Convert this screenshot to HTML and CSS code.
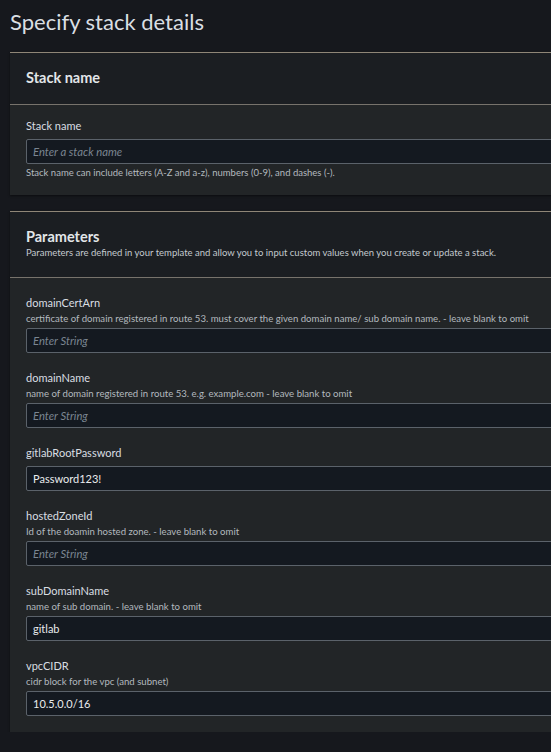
FILE: index.html
```html
<!DOCTYPE html>
<html lang="en">
<head>
<meta charset="utf-8">
<title>Specify stack details</title>
<link rel="stylesheet" href="styles.css">
</head>
<body>
<div class="page">
  <h1 class="title">Specify stack details</h1>

  <section class="card">
    <div class="card-header card-header--simple">
      <h2 class="card-title">Stack name</h2>
    </div>
    <div class="card-body card-body--first">
      <div class="field">
        <div class="label">Stack name</div>
        <div class="input placeholder">Enter a stack name</div>
        <div class="constraint">Stack name can include letters (A-Z and a-z), numbers (0-9), and dashes (-).</div>
      </div>
    </div>
  </section>

  <section class="card">
    <div class="card-header">
      <h2 class="card-title">Parameters</h2>
      <div class="card-desc">Parameters are defined in your template and allow you to input custom values when you create or update a stack.</div>
    </div>
    <div class="card-body">
      <div class="field">
        <div class="label">domainCertArn</div>
        <div class="desc">certificate of domain registered in route 53. must cover the given domain name/ sub domain name. - leave blank to omit</div>
        <div class="input placeholder">Enter String</div>
      </div>
      <div class="field">
        <div class="label">domainName</div>
        <div class="desc">name of domain registered in route 53. e.g. example.com - leave blank to omit</div>
        <div class="input placeholder">Enter String</div>
      </div>
      <div class="field">
        <div class="label">gitlabRootPassword</div>
        <div class="input">Password123!</div>
      </div>
      <div class="field">
        <div class="label">hostedZoneId</div>
        <div class="desc">Id of the doamin hosted zone. - leave blank to omit</div>
        <div class="input placeholder">Enter String</div>
      </div>
      <div class="field">
        <div class="label">subDomainName</div>
        <div class="desc">name of sub domain. - leave blank to omit</div>
        <div class="input">gitlab</div>
      </div>
      <div class="field">
        <div class="label">vpcCIDR</div>
        <div class="desc">cidr block for the vpc (and subnet)</div>
        <div class="input">10.5.0.0/16</div>
      </div>
    </div>
  </section>
</div>
</body>
</html>
```

FILE: styles.css
```css
html, body {
  margin: 0;
  padding: 0;
  background: #16181d;
  overflow: hidden;
}

.page {
  width: 720px;
  padding: 0 0 0 10px;
  font-family: "Lato", "Open Sans", sans-serif;
  color: #d5dbdb;
  display: flex;
  flex-direction: column;
  gap: 16px;
}

.title {
  margin: 0;
  height: 28px;
  padding-top: 8px;
  font-size: 22px;
  line-height: 28px;
  font-weight: 400;
  color: #dadfe3;
}

.card {
  background: #222527;
  border-top: 1px solid #8f8677;
  box-shadow: 0 1px 2px rgba(0, 0, 0, 0.5);
}

.card-header {
  background: #1b1e22;
  padding: 16px 16px 17px;
  border-bottom: 1px solid #77736c;
}

.card-title {
  margin: 0;
  font-size: 14.5px;
  line-height: 18px;
  font-weight: 700;
  color: #e2e6e9;
}

.card-desc {
  font-size: 9.5px;
  line-height: 14px;
  color: #c3c9ce;
}

.card-body {
  padding: 16px;
  display: flex;
  flex-direction: column;
  gap: 16px;
}

.card-body--first {
  padding-top: 12px;
}

.field {
  display: flex;
  flex-direction: column;
}

.label {
  font-size: 11px;
  line-height: 18px;
  color: #d9dee2;
}

.desc {
  font-size: 9.6px;
  line-height: 14px;
  color: #b3b9bf;
}

.input {
  margin-top: 4px;
  height: 25px;
  box-sizing: border-box;
  border: 1px solid #5b626a;
  border-radius: 2px;
  background: #141920;
  padding: 0 6px;
  font-size: 11px;
  line-height: 23px;
  color: #e9ebed;
}

.label + .input {
  margin-top: 4px;
}

.desc + .input {
  margin-top: 2px;
}

.placeholder {
  font-style: italic;
  font-size: 11.3px;
  color: #7b8591;
}

.constraint {
  margin-top: 2px;
  font-size: 9.5px;
  line-height: 13px;
  color: #b3b9bf;
}
```
